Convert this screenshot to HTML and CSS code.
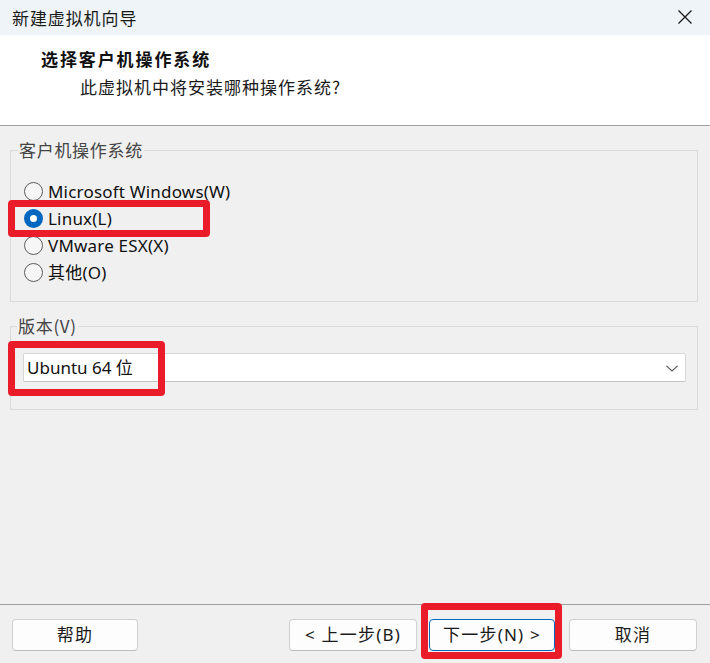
FILE: index.html
```html
<!DOCTYPE html>
<html lang="zh-CN">
<head>
<meta charset="utf-8">
<title>新建虚拟机向导</title>
<link rel="stylesheet" href="styles.css">
</head>
<body>
<div class="window">
  <div class="titlebar">
    <span class="title">新建虚拟机向导</span>
    <svg class="close" width="14" height="14" viewBox="0 0 14 14"><path d="M0.5 0.5 L13.5 13.5 M13.5 0.5 L0.5 13.5" stroke="#1a1a1a" stroke-width="1.3" fill="none"/></svg>
  </div>
  <div class="header">
    <div class="h-title">选择客户机操作系统</div>
    <div class="h-sub">此虚拟机中将安装哪种操作系统?</div>
  </div>
  <div class="body">
    <fieldset class="group group-os">
      <legend>客户机操作系统</legend>
      <div class="radio-row"><span class="radio"></span><span class="label">Microsoft Windows(W)</span></div>
      <div class="radio-row"><span class="radio checked"></span><span class="label">Linux(L)</span></div>
      <div class="radio-row"><span class="radio"></span><span class="label">VMware ESX(X)</span></div>
      <div class="radio-row"><span class="radio"></span><span class="label">其他(O)</span></div>
    </fieldset>
    <fieldset class="group group-ver">
      <legend>版本(V)</legend>
      <div class="select">
        <span class="sel-text">Ubuntu 64 位</span>
        <svg class="chev" width="12" height="7" viewBox="0 0 12 7"><path d="M0.5 0.8 L6 6 L11.5 0.8" stroke="#5a5a5a" stroke-width="1.1" fill="none"/></svg>
      </div>
    </fieldset>
  </div>
  <div class="footer">
    <button class="btn btn-help">帮助</button>
    <div class="spacer"></div>
    <button class="btn btn-back">&lt; 上一步(B)</button>
    <button class="btn btn-next">下一步(N) &gt;</button>
    <button class="btn btn-cancel">取消</button>
  </div>
  <div class="mark mark-linux"></div>
  <div class="mark mark-select"></div>
  <div class="mark mark-next"></div>
</div>
</body>
</html>
```

FILE: styles.css
```css
html, body {
  margin: 0;
  padding: 0;
}
body {
  width: 710px;
  height: 663px;
  overflow: hidden;
  background: #f0f0f0;
  font-family: "Noto Sans", "Noto Sans CJK SC", sans-serif;
  color: #1a1a1a;
}
.window {
  position: relative;
  width: 710px;
  height: 663px;
  display: flex;
  flex-direction: column;
}
.titlebar {
  height: 35px;
  background: #eef4f7;
  display: flex;
  align-items: center;
  justify-content: space-between;
  padding: 0 18px 0 12px;
  box-sizing: border-box;
}
.title {
  font-family: "Noto Sans CJK SC", sans-serif;
  font-size: 17px;
  letter-spacing: 0.9px;
  color: #1a1a1a;
  line-height: 20px;
}
.close {
  display: block;
  margin-top: -1px;
}
.header {
  height: 91px;
  background: #ffffff;
  border-bottom: 1px solid #a0a0a0;
  box-sizing: border-box;
  padding: 14px 0 0 41px;
}
.h-title {
  font-family: "Noto Sans CJK SC", sans-serif;
  font-weight: 700;
  font-size: 17px;
  letter-spacing: 1.9px;
  line-height: 20px;
  color: #111;
}
.h-sub {
  font-family: "Noto Sans CJK SC", sans-serif;
  font-size: 17px;
  letter-spacing: 1px;
  line-height: 20px;
  margin: 8px 0 0 39px;
  color: #1a1a1a;
}
.body {
  display: flex;
  flex-direction: column;
  padding: 0 12px 0 10px;
}
.group {
  margin: 14px 0 0 0;
  padding: 0;
  border: 1px solid #dadada;
  min-width: 0;
}
.group legend {
  font-family: "Noto Sans CJK SC", sans-serif;
  font-size: 17px;
  letter-spacing: 0.7px;
  line-height: 20px;
  color: #444;
  margin-left: -6px;
  padding: 0 1px;
}
.group-os {
  padding: 18px 0 15px 13px;
}
.radio-row {
  height: 27px;
  display: flex;
  align-items: center;
}
.radio {
  width: 19px;
  height: 19px;
  box-sizing: border-box;
  border-radius: 50%;
  border: 1px solid #5c5c5c;
  background: #f6f6f6;
  flex: none;
}
.radio.checked {
  border: 6px solid #0067c0;
  background: #ffffff;
}
.label {
  margin-left: 5px;
  font-size: 17px;
  letter-spacing: 0.2px;
  line-height: 20px;
  color: #111;
}
.group-ver {
  padding: 17px 11px 27px 12px;
}
.select {
  height: 29px;
  box-sizing: border-box;
  background: #ffffff;
  border: 1px solid #d6d6d6;
  border-bottom-color: #c4c4c4;
  border-radius: 2px;
  display: flex;
  align-items: center;
  justify-content: space-between;
  padding: 0 7px 0 3px;
}
.sel-text {
  font-size: 17px;
  line-height: 20px;
  color: #111;
}
.chev {
  display: block;
  margin-top: 1px;
}
.footer {
  margin-top: auto;
  height: 59px;
  border-top: 1px solid #a0a0a0;
  box-sizing: border-box;
  display: flex;
  align-items: flex-start;
  padding: 14px 13px 0 12px;
}
.spacer {
  flex: 1;
}
.btn {
  height: 32px;
  box-sizing: border-box;
  background: #fdfdfd;
  border: 1px solid #d0d0d0;
  border-bottom-color: #bcbcbc;
  border-radius: 4px;
  font-family: "Noto Sans", "Noto Sans CJK SC", sans-serif;
  font-size: 17px;
  letter-spacing: 1.2px;
  line-height: 20px;
  color: #1a1a1a;
  padding: 0;
}
.btn-help { width: 126px; }
.btn-back { width: 128px; }
.btn-next {
  width: 126px;
  margin-left: 12px;
  border: 1px solid #0067c0;
}
.btn-cancel {
  width: 128px;
  margin-left: 14px;
}
.mark {
  position: absolute;
  border: 7px solid #ea1c2a;
  border-radius: 4px;
  box-sizing: border-box;
}
.mark-linux {
  left: 8px;
  top: 200px;
  width: 202px;
  height: 37px;
}
.mark-select {
  left: 8px;
  top: 341px;
  width: 157px;
  height: 55px;
}
.mark-next {
  left: 421px;
  top: 603px;
  width: 141px;
  height: 56px;
}
```
